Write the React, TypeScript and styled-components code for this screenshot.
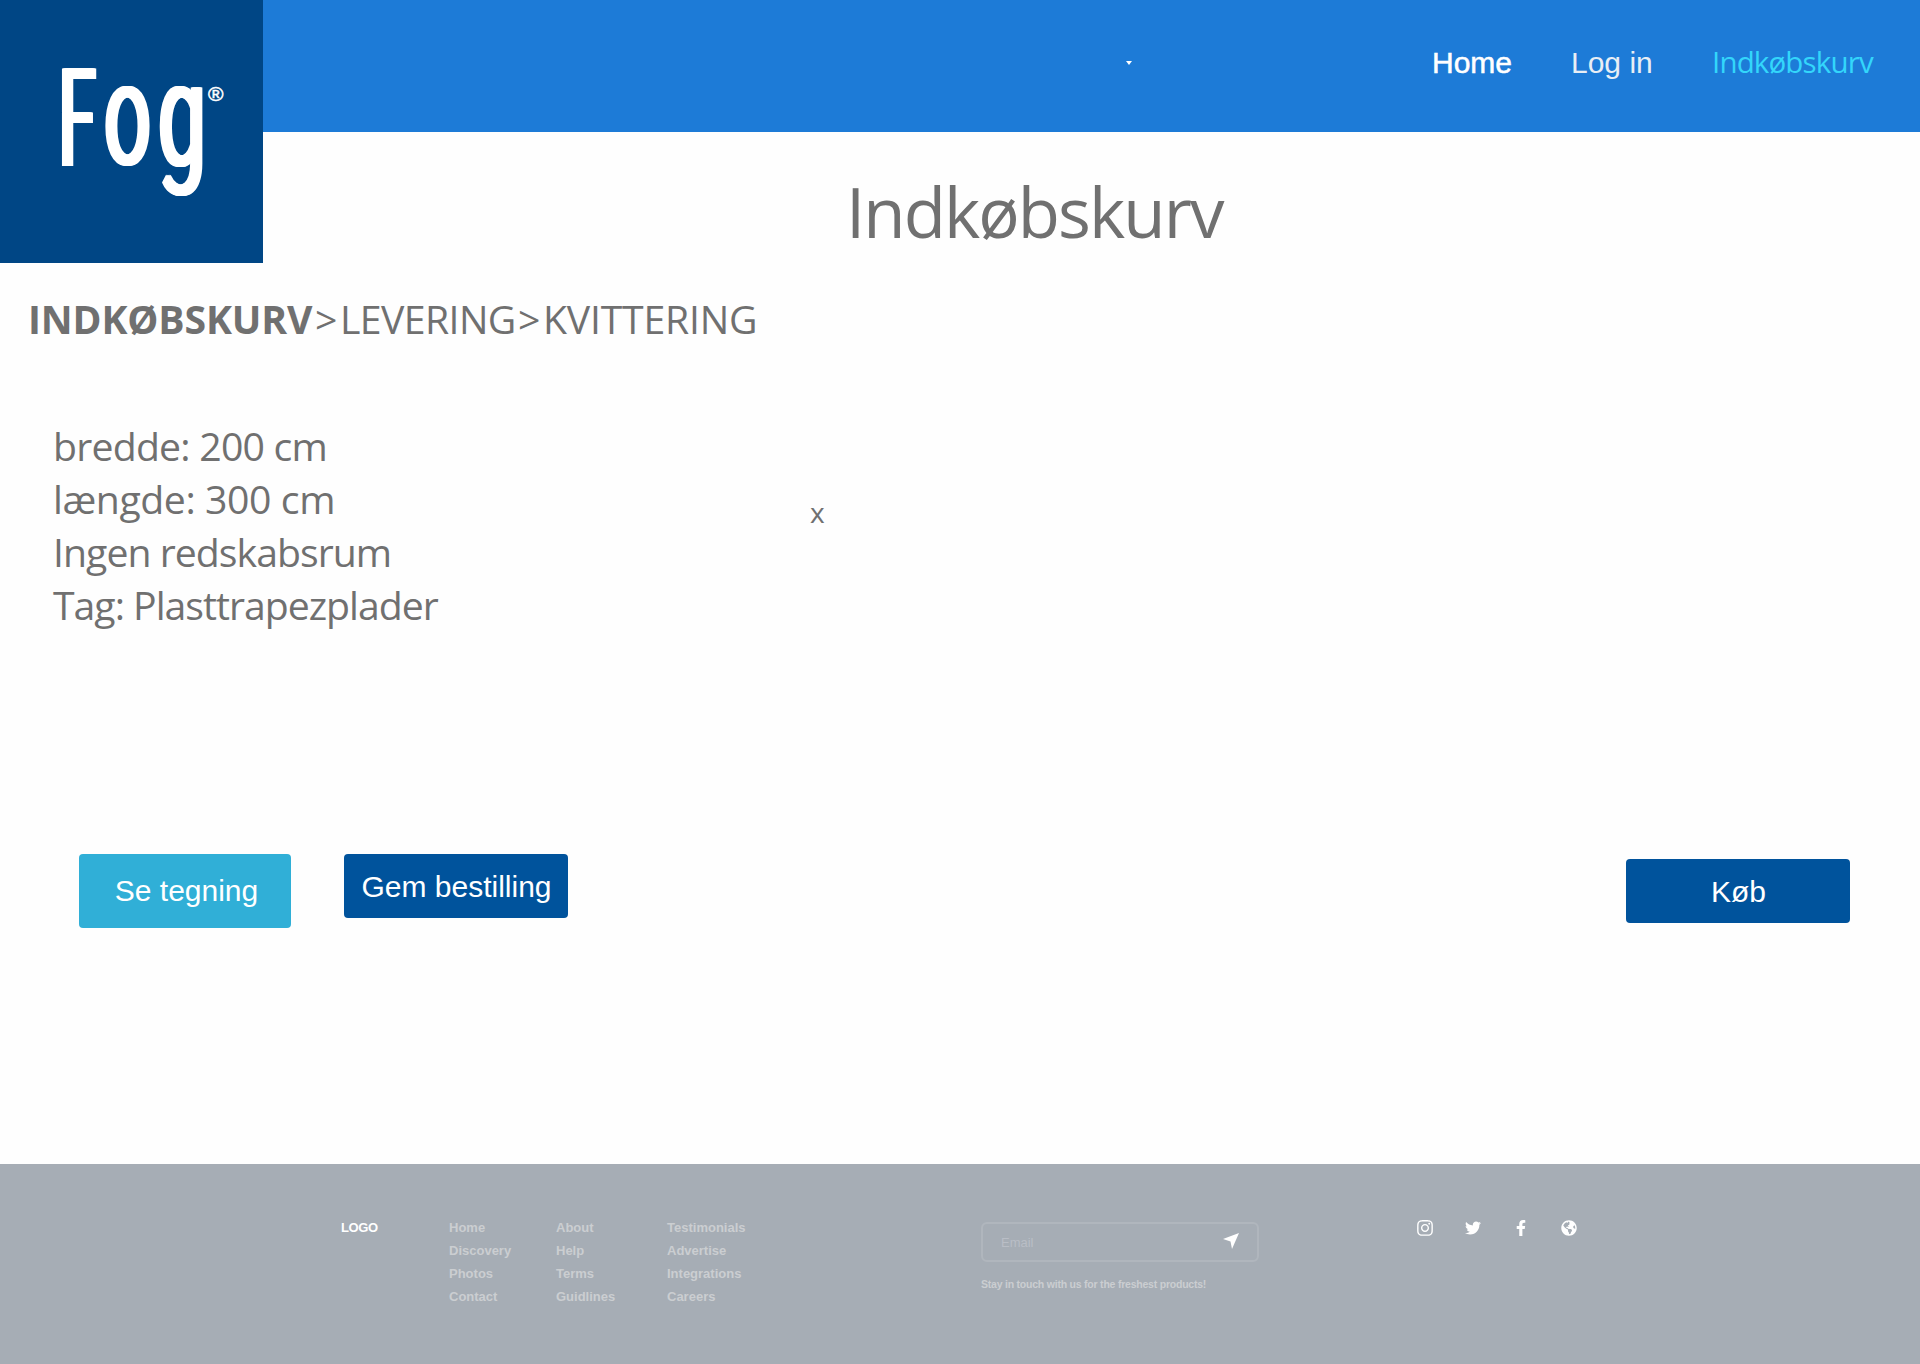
import React from "react";
import styled, { createGlobalStyle } from "styled-components";
import { FaInstagram, FaTwitter, FaFacebookF, FaGlobeAmericas } from "react-icons/fa";

const GlobalStyle = createGlobalStyle`
  * { box-sizing: border-box; }
  body { margin: 0; background: #fefefe; font-family: "Liberation Sans", Arial, sans-serif; }
  p, h1, ul { margin: 0; padding: 0; list-style: none; }
`;

const humanist = `"Open Sans", "Noto Sans", sans-serif`;

const Page = styled.div`
  width: 1920px;
  height: 1364px;
  display: flex;
  flex-direction: column;
  background: #fefefe;
  overflow: hidden;
`;

const Top = styled.div`
  display: grid;
  grid-template-columns: 263px 1fr;
  grid-template-rows: 132px 131px;
`;

const Logo = styled.div`
  grid-row: 1 / 3;
  background: #004685;
  color: #fff;
  display: flex;
  align-items: flex-start;
  padding: 8px 0 0 62px;
  font-family: Roboto, sans-serif;
`;

const Glyph = styled.span<{ $w: number; $size: number; $scale: number; $base: number; $smear: number; $dx: number }>`
  display: block;
  width: ${(p) => p.$w}px;
  height: ${(p) => p.$size}px;
  margin-top: ${(p) => p.$base - p.$size * 0.8}px;
  font-size: ${(p) => p.$size}px;
  line-height: ${(p) => p.$size}px;
  transform: translateX(${(p) => p.$dx}px) scaleX(${(p) => p.$scale});
  transform-origin: 0 0;
  text-shadow: ${(p) => [1, 2, 3].map((i) => `${(p.$smear * i) / 3}px 0 0 #fff, ${(-p.$smear * i) / 3}px 0 0 #fff`).join(", ")};
`;

const Registered = styled.span`
  margin: 74px 0 0 1px;
  font-family: "Liberation Sans", sans-serif;
  font-size: 21px;
  line-height: 24px;
  -webkit-text-stroke: 0.5px #fff;
`;

const Nav = styled.nav`
  background: #1d7bd7;
  display: flex;
  align-items: flex-start;
  justify-content: flex-end;
  padding: 45px 45px 0 0;
`;

const Caret = styled.i`
  width: 0;
  height: 0;
  border: 3.5px solid transparent;
  border-top: 4px solid #fff;
  border-bottom: 0;
  margin: 16px 300px 0 0;
`;

const NavLink = styled.a<{ $w: number; $color?: string; $humanist?: boolean; $spacing?: number; $stroke?: number }>`
  width: ${(p) => p.$w}px;
  font-family: ${(p) => (p.$humanist ? humanist : "inherit")};
  font-size: ${(p) => (p.$humanist ? 29.5 : 30)}px;
  line-height: ${(p) => (p.$humanist ? 34 : 36)}px;
  letter-spacing: ${(p) => p.$spacing ?? 0}px;
  color: ${(p) => p.$color ?? "#fff"};
  -webkit-text-stroke: ${(p) => p.$stroke ?? 0}px currentColor;
  white-space: nowrap;
`;

const Title = styled.h1`
  padding: 31px 0 0 583px;
  font: 400 69px/96px ${humanist};
  letter-spacing: -1.95px;
  color: #707070;
`;

const Crumbs = styled.p`
  display: flex;
  height: 54px;
  margin: 29px 0 0 28px;
  font: 400 39.2px/54px ${humanist};
  color: #707070;
`;

const Crumb = styled.span<{ $w: number; $bold?: boolean; $spacing: number }>`
  width: ${(p) => p.$w}px;
  font-weight: ${(p) => (p.$bold ? 700 : 400)};
  letter-spacing: ${(p) => p.$spacing}px;
  white-space: nowrap;
`;

const Order = styled.section`
  display: flex;
  margin-top: 73px;
  padding-left: 53px;
  height: 212px;
  font-family: ${humanist};
  color: #707070;
`;

const Specs = styled.ul`
  width: 757px;
  font-size: 39.2px;
  line-height: 53px;
`;

const Spec = styled.li<{ $spacing: number }>`
  letter-spacing: ${(p) => p.$spacing}px;
`;

const Remove = styled.span`
  margin-top: 74px;
  font-size: 28px;
  line-height: 38px;
`;

const Actions = styled.div`
  display: flex;
  align-items: flex-start;
  padding: 0 70px 0 79px;
  margin-top: 223px;
  height: 310px;
`;

const Button = styled.button<{ $w?: number; $h?: number; $bg?: string }>`
  width: ${(p) => p.$w ?? 224}px;
  height: ${(p) => p.$h ?? 64}px;
  border: 0;
  border-radius: 4px;
  padding: 2px 0 0 1px;
  background: ${(p) => p.$bg ?? "#00539c"};
  color: #fff;
  font: 30px/34px "Liberation Sans", Arial, sans-serif;
  &:first-child { padding: 0 0 0 3px; }
  & + & { margin-left: 53px; }
  &:last-child { margin: 5px 0 0 auto; }
`;

const Footer = styled.footer`
  flex: none;
  height: 200px;
  background: #a6adb5;
  display: flex;
  align-items: flex-start;
  padding: 52px 0 0 341px;
  color: #cbced1;
  font-size: 13px;
  font-weight: 700;
  line-height: 23px;
`;

const FooterLogo = styled.div`
  width: 108px;
  color: #fff;
  letter-spacing: -0.4px;
`;

const Column = styled.ul<{ $w: number }>`
  width: ${(p) => p.$w}px;
`;

const Newsletter = styled.div`
  width: 436px;
  padding-top: 6px;
`;

const Field = styled.div`
  width: 278px;
  height: 40px;
  border: 2px solid #b0b6bd;
  border-radius: 6px;
  display: flex;
  align-items: center;
  justify-content: space-between;
  padding: 1px 18px 0 18px;
  font-weight: 400;
  color: #b9bec6;
`;

const Plane = styled.svg`
  margin-top: -3px;
`;

const Hint = styled.p`
  margin-top: 11px;
  font-size: 10.5px;
  letter-spacing: -0.22px;
  white-space: nowrap;
`;

const Socials = styled.div`
  display: flex;
  padding-top: 4px;
  color: #fff;
`;

const Social = styled.a`
  display: flex;
  align-items: center;
  justify-content: center;
  width: 16px;
  height: 16px;
  margin-right: 32px;
  svg { flex: none; }
`;

const columns = [
  { w: 107, items: ["Home", "Discovery", "Photos", "Contact"] },
  { w: 111, items: ["About", "Help", "Terms", "Guidlines"] },
  { w: 314, items: ["Testimonials", "Advertise", "Integrations", "Careers"] },
];

export default function App() {
  return (
    <Page>
      <GlobalStyle />
      <Top>
        <Logo>
          <Glyph $w={43} $size={138} $scale={0.48} $base={152} $smear={5} $dx={-3}>F</Glyph>
          <Glyph $w={55} $size={147} $scale={0.56} $base={152} $smear={4} $dx={-1}>o</Glyph>
          <Glyph $w={47} $size={147} $scale={0.58} $base={152} $smear={4} $dx={-2}>g</Glyph>
          <Registered>®</Registered>
        </Logo>
        <Nav>
          <Caret />
          <NavLink $w={139} $stroke={0.5}>Home</NavLink>
          <NavLink $w={141} $color="#e8eef5">Log in</NavLink>
          <NavLink $w={163} $color="#33d6fb" $humanist $spacing={-0.85}>Indkøbskurv</NavLink>
        </Nav>
        <Title>Indkøbskurv</Title>
      </Top>
      <Crumbs>
        <Crumb $w={287} $bold $spacing={-0.15}>INDKØBSKURV</Crumb>
        <Crumb $w={25} $spacing={0}>&gt;</Crumb>
        <Crumb $w={178} $spacing={-0.6}>LEVERING</Crumb>
        <Crumb $w={25} $spacing={0}>&gt;</Crumb>
        <Crumb $w={220} $spacing={-0.2}>KVITTERING</Crumb>
      </Crumbs>
      <Order>
        <Specs>
          <Spec $spacing={-0.77}>bredde: 200 cm</Spec>
          <Spec $spacing={-0.42}>længde: 300 cm</Spec>
          <Spec $spacing={-0.96}>Ingen redskabsrum</Spec>
          <Spec $spacing={-1}>Tag: Plasttrapezplader</Spec>
        </Specs>
        <Remove>x</Remove>
      </Order>
      <Actions>
        <Button $w={212} $h={74} $bg="#30afd7">Se tegning</Button>
        <Button>Gem bestilling</Button>
        <Button>Køb</Button>
      </Actions>
      <Footer>
        <FooterLogo>LOGO</FooterLogo>
        {columns.map((c) => (
          <Column key={c.w} $w={c.w}>
            {c.items.map((t) => <li key={t}>{t}</li>)}
          </Column>
        ))}
        <Newsletter>
          <Field>
            Email
            <Plane width="16" height="16" viewBox="0 0 16 16"><path d="M16 0 9 16 7.5 8.5 0 6Z" fill="#fff" /></Plane>
          </Field>
          <Hint>Stay in touch with us for the freshest products!</Hint>
        </Newsletter>
        <Socials>
          <Social><FaInstagram size={18} /></Social>
          <Social><FaTwitter size={16} /></Social>
          <Social><FaFacebookF size={16} /></Social>
          <Social><FaGlobeAmericas size={16} /></Social>
        </Socials>
      </Footer>
    </Page>
  );
}
